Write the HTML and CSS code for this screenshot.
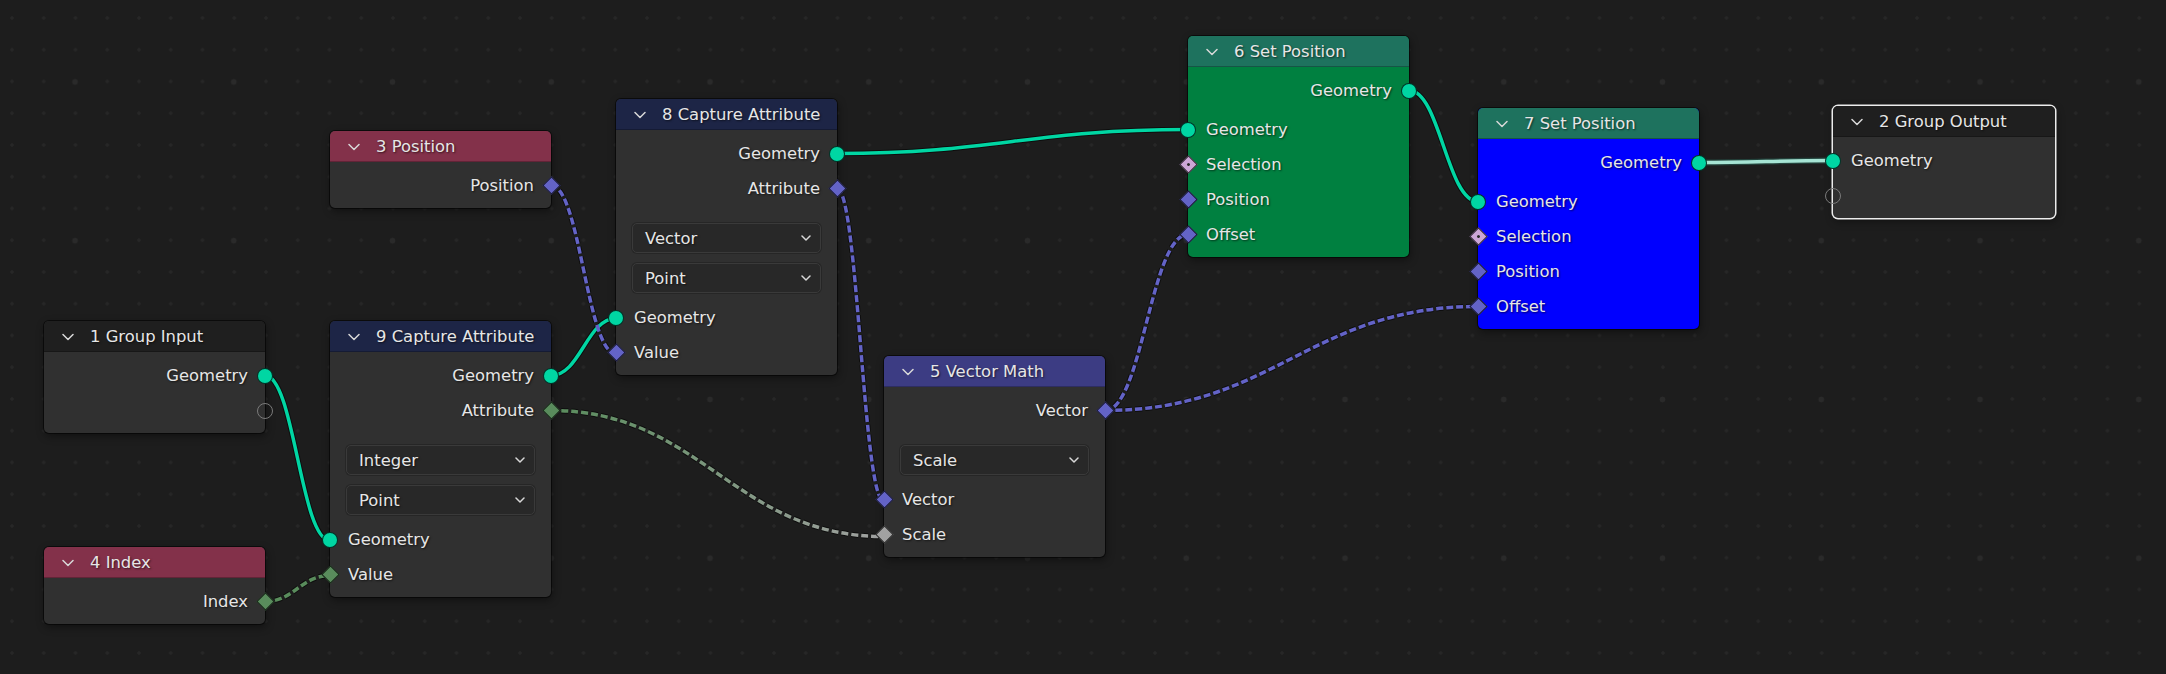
FILE: index.html
```html
<!DOCTYPE html>
<html>
<head>
<meta charset="utf-8">
<link rel="stylesheet" href="styles.css">
</head>
<body>
<div class="canvas">
  <svg class="links" width="2166" height="674" viewBox="0 0 2166 674">
    <defs>
      <linearGradient id="g5" gradientUnits="userSpaceOnUse" x1="551" y1="0" x2="884" y2="0">
        <stop offset="0" stop-color="#598c5c"/>
        <stop offset="1" stop-color="#a1a1a1"/>
      </linearGradient>
    </defs>
    <g class="shadow">
      <path d="M265,375.5 C294.25,375.5 300.75,540.5 330,540.5"/>
      <path d="M551,375.5 C580.25,375.5 586.75,318.5 616,318.5"/>
      <path d="M837,153.5 C994.95,153.5 1030.05,129.5 1188,129.5"/>
      <path d="M1409,90.5 C1440.05,90.5 1446.95,201.5 1478,201.5"/>
    </g>
    <g class="shadow dash">
      <path d="M551,185.5 C580.25,185.5 586.75,353.5 616,353.5"/>
      <path d="M265,601.5 C294.25,601.5 300.75,575.5 330,575.5"/>
      <path d="M551,410.5 C700.85,410.5 734.15,536.5 884,536.5"/>
      <path d="M837,188.5 C858.15,188.5 862.85,501.5 884,501.5"/>
      <path d="M1105,410.5 C1142.35,410.5 1150.65,234.5 1188,234.5"/>
      <path d="M1105,410.5 C1272.85,410.5 1310.15,306.5 1478,306.5"/>
    </g>
    <g class="link geo">
      <path d="M265,375.5 C294.25,375.5 300.75,540.5 330,540.5"/>
      <path d="M551,375.5 C580.25,375.5 586.75,318.5 616,318.5"/>
      <path d="M837,153.5 C994.95,153.5 1030.05,129.5 1188,129.5"/>
      <path d="M1409,90.5 C1440.05,90.5 1446.95,201.5 1478,201.5"/>
    </g>
    <g class="link dash vec">
      <path d="M551,185.5 C580.25,185.5 586.75,353.5 616,353.5"/>
      <path d="M837,188.5 C858.15,188.5 862.85,501.5 884,501.5"/>
      <path d="M1105,410.5 C1142.35,410.5 1150.65,234.5 1188,234.5"/>
      <path d="M1105,410.5 C1272.85,410.5 1310.15,306.5 1478,306.5"/>
    </g>
    <g class="link dash int">
      <path d="M265,601.5 C294.25,601.5 300.75,575.5 330,575.5"/>
    </g>
    <g class="link dash">
      <path stroke="url(#g5)" d="M551,410.5 C700.85,410.5 734.15,536.5 884,536.5"/>
    </g>
    <path class="sel-outer" d="M1699,162.5 C1759.3,162.5 1772.7,160.5 1833,160.5"/>
    <path class="sel-inner" d="M1699,162.5 C1759.3,162.5 1772.7,160.5 1833,160.5"/>
  </svg>

  <!-- 1 Group Input -->
  <div class="node n-gi">
    <div class="hdr h-io"><svg class="chev" width="12" height="8" viewBox="0 0 12 8"><path d="M1 1.5 L6 6.5 L11 1.5"/></svg><span>1 Group Input</span></div>
    <div class="body">
      <div class="outs">
        <div class="row out"><span>Geometry</span><i class="sock geo"></i></div>
        <div class="row out"><i class="sock empty"></i></div>
      </div>
    </div>
  </div>

  <!-- 3 Position -->
  <div class="node n-pos">
    <div class="hdr h-input"><svg class="chev" width="12" height="8" viewBox="0 0 12 8"><path d="M1 1.5 L6 6.5 L11 1.5"/></svg><span>3 Position</span></div>
    <div class="body">
      <div class="outs">
        <div class="row out"><span>Position</span><i class="sock dia vec"></i></div>
      </div>
    </div>
  </div>

  <!-- 9 Capture Attribute -->
  <div class="node n-c9">
    <div class="hdr h-cap"><svg class="chev" width="12" height="8" viewBox="0 0 12 8"><path d="M1 1.5 L6 6.5 L11 1.5"/></svg><span>9 Capture Attribute</span></div>
    <div class="body">
      <div class="outs">
        <div class="row out"><span>Geometry</span><i class="sock geo"></i></div>
        <div class="row out"><span>Attribute</span><i class="sock dia int"></i></div>
      </div>
      <div class="opts">
        <div class="dd"><span>Integer</span><svg class="ddc" width="10" height="6" viewBox="0 0 10 6"><path d="M1 1 L5 5 L9 1"/></svg></div>
        <div class="dd"><span>Point</span><svg class="ddc" width="10" height="6" viewBox="0 0 10 6"><path d="M1 1 L5 5 L9 1"/></svg></div>
      </div>
      <div class="ins">
        <div class="row in"><i class="sock geo"></i><span>Geometry</span></div>
        <div class="row in"><i class="sock dia int"></i><span>Value</span></div>
      </div>
    </div>
  </div>

  <!-- 4 Index -->
  <div class="node n-idx">
    <div class="hdr h-input"><svg class="chev" width="12" height="8" viewBox="0 0 12 8"><path d="M1 1.5 L6 6.5 L11 1.5"/></svg><span>4 Index</span></div>
    <div class="body">
      <div class="outs">
        <div class="row out"><span>Index</span><i class="sock dia int"></i></div>
      </div>
    </div>
  </div>

  <!-- 8 Capture Attribute -->
  <div class="node n-c8">
    <div class="hdr h-cap"><svg class="chev" width="12" height="8" viewBox="0 0 12 8"><path d="M1 1.5 L6 6.5 L11 1.5"/></svg><span>8 Capture Attribute</span></div>
    <div class="body">
      <div class="outs">
        <div class="row out"><span>Geometry</span><i class="sock geo"></i></div>
        <div class="row out"><span>Attribute</span><i class="sock dia vec"></i></div>
      </div>
      <div class="opts">
        <div class="dd"><span>Vector</span><svg class="ddc" width="10" height="6" viewBox="0 0 10 6"><path d="M1 1 L5 5 L9 1"/></svg></div>
        <div class="dd"><span>Point</span><svg class="ddc" width="10" height="6" viewBox="0 0 10 6"><path d="M1 1 L5 5 L9 1"/></svg></div>
      </div>
      <div class="ins">
        <div class="row in"><i class="sock geo"></i><span>Geometry</span></div>
        <div class="row in"><i class="sock dia vec"></i><span>Value</span></div>
      </div>
    </div>
  </div>

  <!-- 5 Vector Math -->
  <div class="node n-vm">
    <div class="hdr h-vm"><svg class="chev" width="12" height="8" viewBox="0 0 12 8"><path d="M1 1.5 L6 6.5 L11 1.5"/></svg><span>5 Vector Math</span></div>
    <div class="body">
      <div class="outs">
        <div class="row out"><span>Vector</span><i class="sock dia vec"></i></div>
      </div>
      <div class="opts">
        <div class="dd"><span>Scale</span><svg class="ddc" width="10" height="6" viewBox="0 0 10 6"><path d="M1 1 L5 5 L9 1"/></svg></div>
      </div>
      <div class="ins">
        <div class="row in"><i class="sock dia vec"></i><span>Vector</span></div>
        <div class="row in"><i class="sock dia flt"></i><span>Scale</span></div>
      </div>
    </div>
  </div>

  <!-- 6 Set Position -->
  <div class="node n-sp6 body-green">
    <div class="hdr h-geo"><svg class="chev" width="12" height="8" viewBox="0 0 12 8"><path d="M1 1.5 L6 6.5 L11 1.5"/></svg><span>6 Set Position</span></div>
    <div class="body">
      <div class="outs">
        <div class="row out"><span>Geometry</span><i class="sock geo"></i></div>
      </div>
      <div class="ins">
        <div class="row in"><i class="sock geo"></i><span>Geometry</span></div>
        <div class="row in"><i class="sock dia bool"></i><span>Selection</span></div>
        <div class="row in"><i class="sock dia vec"></i><span>Position</span></div>
        <div class="row in"><i class="sock dia vec"></i><span>Offset</span></div>
      </div>
    </div>
  </div>

  <!-- 7 Set Position -->
  <div class="node n-sp7 body-blue">
    <div class="hdr h-geo"><svg class="chev" width="12" height="8" viewBox="0 0 12 8"><path d="M1 1.5 L6 6.5 L11 1.5"/></svg><span>7 Set Position</span></div>
    <div class="body">
      <div class="outs">
        <div class="row out"><span>Geometry</span><i class="sock geo"></i></div>
      </div>
      <div class="ins">
        <div class="row in"><i class="sock geo"></i><span>Geometry</span></div>
        <div class="row in"><i class="sock dia bool"></i><span>Selection</span></div>
        <div class="row in"><i class="sock dia vec"></i><span>Position</span></div>
        <div class="row in"><i class="sock dia vec"></i><span>Offset</span></div>
      </div>
    </div>
  </div>

  <!-- 2 Group Output -->
  <div class="node n-go selected">
    <div class="hdr h-io"><svg class="chev" width="12" height="8" viewBox="0 0 12 8"><path d="M1 1.5 L6 6.5 L11 1.5"/></svg><span>2 Group Output</span></div>
    <div class="body">
      <div class="ins">
        <div class="row in"><i class="sock geo"></i><span>Geometry</span></div>
        <div class="row in"><i class="sock empty"></i></div>
      </div>
    </div>
  </div>
</div>
</body>
</html>
```

FILE: styles.css
```css
* { box-sizing: border-box; }

html, body {
  margin: 0;
  padding: 0;
  background: #1d1d1d;
}

.canvas {
  position: relative;
  width: 2166px;
  height: 674px;
  overflow: hidden;
  background-color: #1d1d1d;
  background-image:
    radial-gradient(circle, #2a2a2a 0 2.6px, transparent 3.2px),
    radial-gradient(circle, #272727 0 1.4px, transparent 2px);
  background-size: 158.75px 158.75px, 31.75px 31.75px;
  background-position: -4.4px 2.6px, -3.9px 2.1px;
  font-family: "DejaVu Sans", "Liberation Sans", sans-serif;
  font-size: 16.4px;
  color: #e6e6e6;
}

/* ---------- links ---------- */
.links {
  position: absolute;
  left: 0;
  top: 0;
  z-index: 0;
}
.links path { fill: none; }
.shadow path {
  stroke: rgba(0, 0, 0, 0.55);
  stroke-width: 5.5;
}
.shadow.dash path { stroke-dasharray: 7 3; }
.link path { stroke-width: 3.5; }
.link.dash path { stroke-dasharray: 7 3; }
.link.geo path { stroke: #00d6a3; }
.link.vec path { stroke: #6363c7; }
.link.int path { stroke: #598c5c; }
.sel-outer {
  stroke: #24443d;
  stroke-width: 6;
}
.sel-inner {
  stroke: #a6e4d4;
  stroke-width: 3.5;
}

/* ---------- nodes ---------- */
.node {
  position: absolute;
  z-index: 1;
  width: 221px;
  border-radius: 5px;
  background: #303030;
  box-shadow: 0 0 0 1px rgba(0, 0, 0, 0.55), 1px 3px 9px rgba(0, 0, 0, 0.45);
}
.node.selected {
  box-shadow: 0 0 0 1.5px #ececec, 1px 3px 9px rgba(0, 0, 0, 0.45);
}
.body-green { background: #008040; }
.body-blue { background: #0000ff; }

.n-gi  { left: 44px;   top: 321px; }
.n-pos { left: 330px;  top: 131px; }
.n-c9  { left: 330px;  top: 321px; }
.n-idx { left: 44px;   top: 547px; }
.n-c8  { left: 616px;  top: 99px; }
.n-vm  { left: 884px;  top: 356px; }
.n-sp6 { left: 1188px; top: 36px; }
.n-sp7 { left: 1478px; top: 108px; }
.n-go  { left: 1833px; top: 106px; width: 222px; }

.hdr {
  height: 31px;
  display: flex;
  align-items: center;
  gap: 16px;
  padding-left: 18px;
  border-radius: 5px 5px 0 0;
  box-shadow: inset 0 -1px 0 rgba(0, 0, 0, 0.25);
  white-space: nowrap;
  text-shadow: 1px 1px 2px rgba(0, 0, 0, 0.6);
}
.h-io    { background: #1f1f1f; }
.h-input { background: #83314a; }
.h-cap   { background: #1d2546; }
.h-vm    { background: #3c3c83; }
.h-geo   { background: #1e725e; }

.chev {
  flex: none;
  margin-top: 1px;
}
.chev path {
  fill: none;
  stroke: #d8d8d8;
  stroke-width: 1.5;
  stroke-linecap: round;
  stroke-linejoin: round;
}

.body {
  padding: 6px 0 5px;
}
.outs + .ins { margin-top: 4px; }

.row {
  position: relative;
  height: 35px;
  display: flex;
  align-items: center;
  padding: 0 18px;
  white-space: nowrap;
  text-shadow: 1px 1px 2px rgba(0, 0, 0, 0.6);
}
.row.out {
  justify-content: flex-end;
  padding-right: 17px;
}

/* ---------- sockets ---------- */
.sock {
  position: absolute;
  top: 50%;
  display: block;
}
.sock.geo {
  width: 16px;
  height: 16px;
  margin-top: -8px;
  border-radius: 50%;
  background: #00d6a3;
  border: 1px solid rgba(0, 0, 0, 0.75);
}
.out .sock.geo { right: -8px; }
.in .sock.geo { left: -8px; }

.sock.empty {
  width: 16px;
  height: 16px;
  margin-top: -8px;
  border-radius: 50%;
  border: 1.6px solid #7a7a7a;
}
.out .sock.empty { right: -8px; }
.in .sock.empty { left: -8px; }

.sock.dia {
  width: 13px;
  height: 13px;
  margin-top: -6.5px;
  transform: rotate(45deg);
  border: 1px solid rgba(0, 0, 0, 0.75);
}
.out .sock.dia { right: -6.5px; }
.in .sock.dia { left: -6.5px; }
.dia.vec  { background: #6363c7; }
.dia.int  { background: #598c5c; }
.dia.flt  { background: #a1a1a1; }
.dia.bool { background: #cca6d6; }
.dia.bool::after {
  content: "";
  position: absolute;
  left: 4px;
  top: 4px;
  width: 3px;
  height: 3px;
  border-radius: 50%;
  background: #2a2a2a;
}

/* ---------- dropdowns ---------- */
.opts {
  display: flex;
  flex-direction: column;
  gap: 10px;
  padding: 17px 16px 7px;
}
.dd {
  height: 30px;
  display: flex;
  align-items: center;
  justify-content: space-between;
  padding: 0 9px 0 12px;
  background: #282828;
  border: 1px solid #3a3a3a;
  border-radius: 5px;
  box-shadow: 0 0 0 1px rgba(0, 0, 0, 0.2);
  text-shadow: 1px 1px 2px rgba(0, 0, 0, 0.6);
}
.ddc path {
  fill: none;
  stroke: #d8d8d8;
  stroke-width: 1.5;
  stroke-linecap: round;
  stroke-linejoin: round;
}
```
